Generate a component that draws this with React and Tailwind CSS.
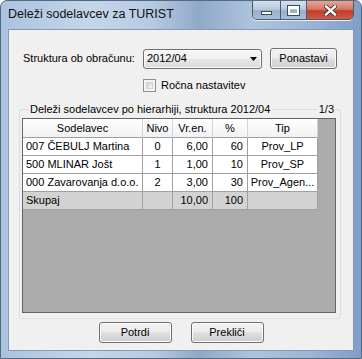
import React from "react";

const font = { fontFamily: '"Liberation Sans", Arial, sans-serif' };

function WinButton({ children, w = "w-[73px]" }) {
  return (
    <div
      className={`${w} h-[21px] rounded-[3px] border border-[#707070] bg-[linear-gradient(to_bottom,#f2f2f2_0%,#ebebeb_48%,#dddddd_52%,#cfcfcf_100%)] shadow-[inset_0_0_0_1px_#fbfbfb] flex items-center justify-center text-[11px] text-black`}
    >
      {children}
    </div>
  );
}

const cols = [
  { w: "w-[120px]", align: "justify-start pl-[3px]" },
  { w: "w-[30px]", align: "justify-center" },
  { w: "w-[40px]", align: "justify-end pr-[4px]" },
  { w: "w-[35px]", align: "justify-end pr-[4px]" },
  { w: "w-[70px]", align: "justify-center" },
];

const rows = [
  ["007 ČEBULJ Martina", "0", "6,00", "60", "Prov_LP"],
  ["500 MLINAR Jošt", "1", "1,00", "10", "Prov_SP"],
  ["000 Zavarovanja d.o.o.", "2", "3,00", "30", "Prov_Agen..."],
];

export default function App() {
  return (
    <div
      style={font}
      className="w-[362px] h-[359px] flex flex-col rounded-t-[7px] border border-[#56697f] bg-[linear-gradient(to_right,#aac3e0_0%,#c4d6ea_25%,#b6cae2_42%,#8fa9c9_55%,#aec4de_70%,#9cb6d6_85%,#7f9fc8_100%)] overflow-hidden"
    >
      {/* Title bar */}
      <div className="h-[28px] flex items-start shrink-0">
        <div className="pl-[7px] pt-[6px] text-[12.5px] text-[#111] leading-[14px]">
          Deleži sodelavcev za TURIST
        </div>
        <div className="flex-1" />
        <div className="mr-[7px] flex h-[19px] rounded-b-[5px] border border-t-0 border-[#4b5a6c] overflow-hidden shadow-[0_1px_0_#e6eef7]">
          <div className="w-[28px] h-full flex items-center justify-center bg-[linear-gradient(to_bottom,#d5e0ec_0%,#b9c9dc_45%,#98aecb_55%,#a9bfd8_100%)] border-r border-[#4b5a6c]">
            <div className="w-[11px] h-[4px] mt-[5px] bg-white border border-[#3d4a5a]" />
          </div>
          <div className="w-[26px] h-full flex items-center justify-center bg-[linear-gradient(to_bottom,#d5e0ec_0%,#b9c9dc_45%,#98aecb_55%,#a9bfd8_100%)] border-r border-[#4b5a6c]">
            <div className="w-[11px] h-[9px] border-[2px] border-white border-t-[3px] shadow-[0_0_0_1px_#3d4a5a]" />
          </div>
          <div className="w-[46px] h-full flex items-center justify-center bg-[linear-gradient(to_bottom,#e8a493_0%,#d47a67_45%,#c23d2a_55%,#d35a3f_100%)]">
            <svg width="13" height="11" viewBox="0 0 13 11">
              <path d="M2 1.5 L11 9.5 M11 1.5 L2 9.5" stroke="#3a2a2a" strokeWidth="4" strokeLinecap="square" />
              <path d="M2 1.5 L11 9.5 M11 1.5 L2 9.5" stroke="#ffffff" strokeWidth="2.4" strokeLinecap="square" />
            </svg>
          </div>
        </div>
      </div>

      {/* Client area */}
      <div className="flex-1 mx-[7px] mb-[7px] border border-[#8799b0] bg-[#f0f0f0] flex flex-col text-[11px] text-black">
        {/* Row 1 */}
        <div className="mt-[18px] flex items-center pl-[14px] h-[21px]">
          <div className="w-[120px]">Struktura ob obračunu:</div>
          <div className="w-[119px] h-[20px] rounded-[3px] border border-[#707070] bg-[linear-gradient(to_bottom,#f6f6f6_0%,#f0f0f0_48%,#e6e6e6_52%,#dcdcdc_100%)] shadow-[inset_0_0_0_1px_#fcfcfc] flex items-center pl-[3px] pr-[4px]">
            <span className="flex-1">2012/04</span>
            <svg width="7" height="4" viewBox="0 0 7 4">
              <path d="M0 0 H7 L3.5 4 Z" fill="#000" />
            </svg>
          </div>
          <div className="ml-[8px]">
            <WinButton w="w-[67px]">Ponastavi</WinButton>
          </div>
        </div>

        {/* Row 2 checkbox */}
        <div className="mt-[10px] flex items-center pl-[134px] h-[13px]">
          <div className="w-[13px] h-[13px] border border-[#8e8f8f] bg-[#f4f4f4] p-[2px]">
            <div className="w-full h-full bg-[linear-gradient(135deg,#cbcfd5_0%,#f4f4f4_100%)] border border-[#d0d3d6]" />
          </div>
          <span className="ml-[5px]">Ročna nastavitev</span>
        </div>

        {/* Group box */}
        <fieldset className="mt-[11px] mx-[10px] w-[322px] h-[216px] border border-[#d5dfe5] rounded-[3px] pl-[2px] pr-[3px] pt-[2px]">
          <legend className="ml-[6px] w-[308px] flex items-center text-[11px] leading-[13px]">
            <span className="px-[2px]">Deleži sodelavcev po hierarhiji, struktura 2012/04</span>
            <span className="flex-1 h-px bg-[#d5dfe5]" />
            <span className="px-[2px]">1/3</span>
          </legend>

          {/* Grid */}
          <div className="w-[314px] h-[195px] border border-[#646464] bg-[#ababab] flex flex-col">
            {/* Header */}
            <div className="flex h-[19px]">
              {["Sodelavec", "Nivo", "Vr.en.", "%", "Tip"].map((h, i) => (
                <div
                  key={h}
                  className={`${cols[i].w} h-full flex items-center justify-center border-r border-b border-[#d5d5d5] border-b-[#a0a0a0] bg-[linear-gradient(to_bottom,#ffffff_0%,#f7f8fa_50%,#f1f2f4_100%)]`}
                >
                  {h}
                </div>
              ))}
            </div>
            {rows.map((r, ri) => (
              <div key={ri} className="flex h-[18px]">
                {r.map((c, i) => (
                  <div
                    key={i}
                    className={`${cols[i].w} h-full flex items-center ${cols[i].align} border-r border-b border-[#a0a0a0] bg-white whitespace-nowrap overflow-hidden`}
                  >
                    {c}
                  </div>
                ))}
              </div>
            ))}
            <div className="flex h-[18px]">
              {["Skupaj", "", "10,00", "100", ""].map((c, i) => (
                <div
                  key={i}
                  className={`${cols[i].w} h-full flex items-center ${cols[i].align} border-r border-b border-[#a0a0a0] bg-[#d3d3d3]`}
                >
                  {c}
                </div>
              ))}
            </div>
          </div>
        </fieldset>

        {/* Bottom buttons */}
        <div className="mt-[3px] flex justify-center gap-[19px]">
          <WinButton>Potrdi</WinButton>
          <WinButton>Prekliči</WinButton>
        </div>
      </div>
    </div>
  );
}
